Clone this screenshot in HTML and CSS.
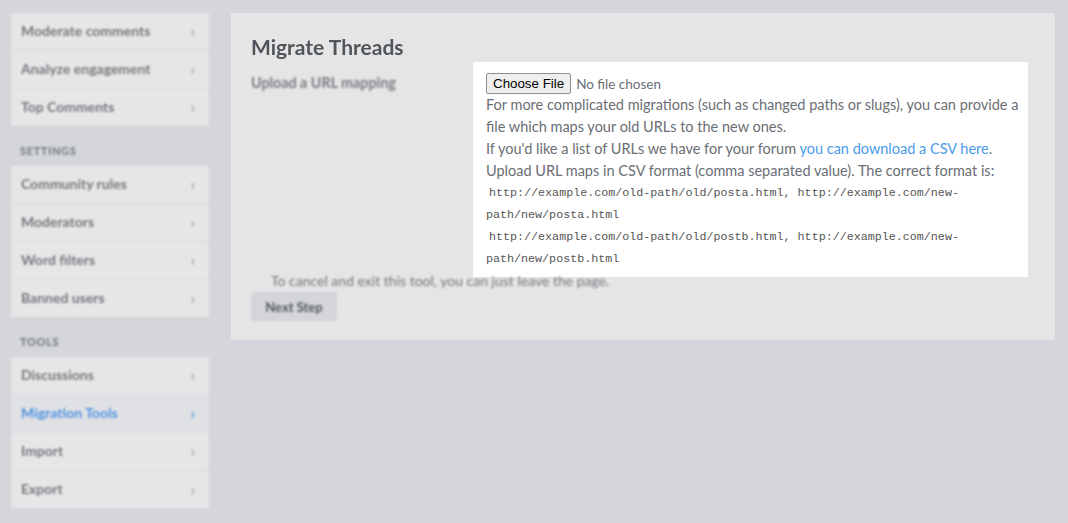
FILE: index.html
```html
<!DOCTYPE html>
<html>
<head>
<meta charset="utf-8">
<link rel="stylesheet" href="styles.css">
</head>
<body>
<div class="layout">
  <nav class="sidebar">
    <ul class="group">
      <li class="item"><span>Moderate comments</span><span class="chev">›</span></li>
      <li class="item"><span>Analyze engagement</span><span class="chev">›</span></li>
      <li class="item"><span>Top Comments</span><span class="chev">›</span></li>
    </ul>
    <h4 class="heading">Settings</h4>
    <ul class="group">
      <li class="item"><span>Community rules</span><span class="chev">›</span></li>
      <li class="item"><span>Moderators</span><span class="chev">›</span></li>
      <li class="item"><span>Word filters</span><span class="chev">›</span></li>
      <li class="item"><span>Banned users</span><span class="chev">›</span></li>
    </ul>
    <h4 class="heading">Tools</h4>
    <ul class="group">
      <li class="item"><span>Discussions</span><span class="chev">›</span></li>
      <li class="item active"><span>Migration Tools</span><span class="chev">›</span></li>
      <li class="item"><span>Import</span><span class="chev">›</span></li>
      <li class="item"><span>Export</span><span class="chev">›</span></li>
    </ul>
  </nav>
  <main class="panel">
    <h2 class="title">Migrate Threads</h2>
    <div class="row">
      <div class="label">Upload a URL mapping</div>
      <div class="box">
        <div class="file"><button class="file-btn" type="button">Choose File</button><span class="file-name">No file chosen</span></div>
        <p class="txt">For more complicated migrations (such as changed paths or slugs), you can provide a file which maps your old URLs to the new ones.</p>
        <p class="txt">If you'd like a list of URLs we have for your forum <a class="link" href="#">you can download a CSV here</a>.</p>
        <p class="txt">Upload URL maps in CSV format (comma separated value). The correct format is:</p>
        <p class="code"><code>http://example.com/old-path/old/posta.html, http://example.com/new-path/new/posta.html</code></p>
        <p class="code"><code>http://example.com/old-path/old/postb.html, http://example.com/new-path/new/postb.html</code></p>
      </div>
    </div>
    <p class="cancel">To cancel and exit this tool, you can just leave the page.</p>
    <button class="next" type="button">Next Step</button>
  </main>
</div>
</body>
</html>
```
FILE: styles.css
```css
* { box-sizing: border-box; }
html, body { margin: 0; padding: 0; }
body {
  background: #d4d6db;
  font-family: "Lato", "Noto Sans", sans-serif;
  width: 1068px;
  height: 523px;
  overflow: hidden;
}
.layout {
  display: flex;
  align-items: flex-start;
  gap: 22px;
  padding: 13px 0 0 11px;
}
.sidebar {
  width: 198px;
  flex: none;
  filter: blur(0.8px);
}
.group {
  list-style: none;
  margin: 0;
  padding: 0;
  background: #e6e6e6;
}
.item {
  height: 38px;
  display: flex;
  align-items: center;
  justify-content: space-between;
  padding: 0 14px 2px 10px;
  font-size: 14px;
  font-weight: bold;
  color: #74787e;
  border-top: 1px solid #dadcdf;
}
.item:first-child { border-top: 0; height: 37px; padding-bottom: 2px; }
.item .chev { font-size: 15px; color: #a4a7ab; }
.item.active { background: #dfe1e5; color: #4f93e0; }
.item.active .chev { color: #4f93e0; }
.heading {
  margin: 0;
  height: 40px;
  display: flex;
  align-items: center;
  padding: 9px 0 0 9px;
  font-size: 11px;
  font-weight: 900;
  letter-spacing: 0.6px;
  text-transform: uppercase;
  color: #7a7f86;
}
.panel {
  width: 824px;
  background: #e5e5e5;
  padding: 22px 27px 19px 20px;
}
.title {
  margin: 0 0 3px;
  font-size: 21px;
  font-weight: bold;
  color: #50555b;
  line-height: 24px;
  filter: blur(0.7px);
}
.row {
  display: flex;
}
.label {
  width: 222px;
  flex: none;
  padding-top: 12px;
  font-size: 14.3px;
  font-weight: bold;
  color: #777b81;
  filter: blur(0.8px);
}
.box {
  flex: 1;
  background: #fff;
  padding: 11px 8px 7px 13px;
  color: #6a6e74;
  font-size: 14.5px;
}
.file {
  display: flex;
  align-items: center;
  height: 21px;
}
.file-btn {
  font-family: "Liberation Sans", Arial, sans-serif;
  font-size: 13.33px;
  color: #000;
  background: #efefef;
  border: 1px solid #8f8f8f;
  border-radius: 2px;
  height: 21px;
  padding: 0 6px;
  margin: 0 5px 0 0;
}
.file-name { font-size: 13.5px; color: #6a6e74; }
.txt {
  margin: 0;
  line-height: 22px;
}
.link { color: #4a9bea; text-decoration: none; }
.code {
  margin: 0;
  line-height: 22px;
  font-family: "Liberation Mono", "Courier New", monospace;
  font-size: 11.7px;
  color: #555;
  text-indent: 3px;
}
.code code { font-family: inherit; }
.cancel {
  margin: -6px 0 0 20px;
  line-height: 20px;
  font-size: 14px;
  color: #73777d;
  filter: blur(0.8px);
}
.next {
  margin-top: 1px;
  width: 86px;
  height: 29px;
  border: 0;
  border-radius: 2px;
  background: #d3d5da;
  font-family: "Lato", sans-serif;
  font-size: 13px;
  font-weight: bold;
  color: #55595f;
  filter: blur(0.8px);
}
```
